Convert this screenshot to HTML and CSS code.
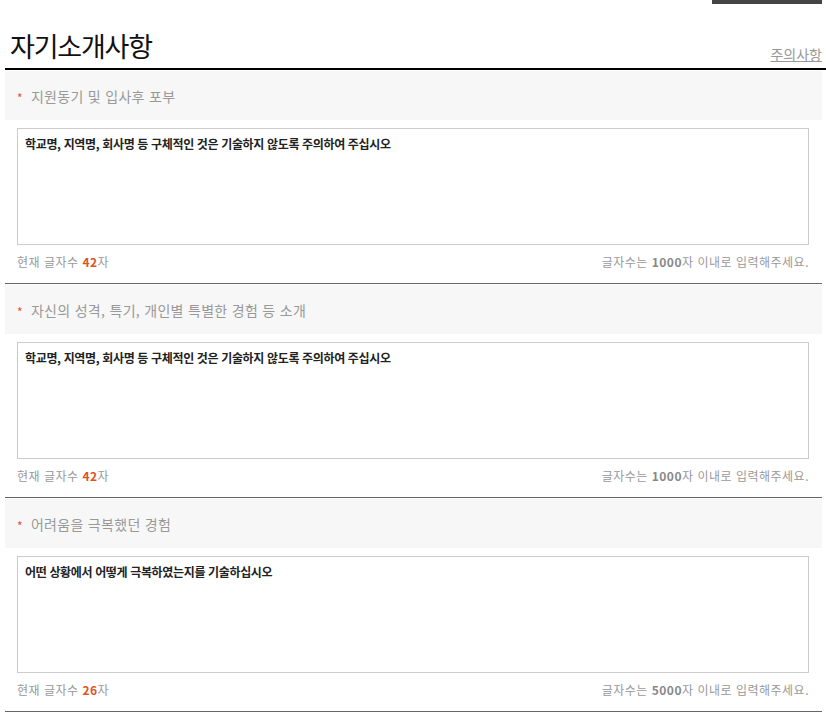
FILE: index.html
```html
<!DOCTYPE html>
<html lang="ko">
  <head>
    <meta charset="UTF-8" />
    <meta name="viewport" content="width=device-width, initial-scale=1.0" />
    <title>자기소개사항</title>
    <link rel="stylesheet" href="styles.css">
  </head>
  <body>
    <div class="top-bar"><span class="top-tab"></span></div>

    <div class="intro">
      <!-- 제목 영역 -->
      <div class="intro-head">
        <h2 class="intro-title">자기소개사항</h2>
        <a href="#" class="intro-notice">주의사항</a>
      </div>

      <!-- 문항 1 -->
      <div class="q-item">
        <div class="q-label"><span class="q-star">*</span>지원동기 및 입사후 포부</div>
        <div class="q-body">
          <div class="q-box">학교명, 지역명, 회사명 등 구체적인 것은 기술하지 않도록 주의하여 주십시오</div>
        </div>
        <div class="q-foot">
          <span>현재 글자수 <b class="q-count">42</b>자</span>
          <span>글자수는 <b>1000</b>자 이내로 입력해주세요.</span>
        </div>
      </div>

      <!-- 문항 2 -->
      <div class="q-item">
        <div class="q-label"><span class="q-star">*</span>자신의 성격, 특기, 개인별 특별한 경험 등 소개</div>
        <div class="q-body">
          <div class="q-box">학교명, 지역명, 회사명 등 구체적인 것은 기술하지 않도록 주의하여 주십시오</div>
        </div>
        <div class="q-foot">
          <span>현재 글자수 <b class="q-count">42</b>자</span>
          <span>글자수는 <b>1000</b>자 이내로 입력해주세요.</span>
        </div>
      </div>

      <!-- 문항 3 -->
      <div class="q-item">
        <div class="q-label"><span class="q-star">*</span>어려움을 극복했던 경험</div>
        <div class="q-body">
          <div class="q-box">어떤 상황에서 어떻게 극복하였는지를 기술하십시오</div>
        </div>
        <div class="q-foot">
          <span>현재 글자수 <b class="q-count">26</b>자</span>
          <span>글자수는 <b>5000</b>자 이내로 입력해주세요.</span>
        </div>
      </div>
    </div>
  </body>
</html>
```

FILE: styles.css
```css
* {
  padding: 0;
  margin: 0;
  box-sizing: border-box;
}

body {
  background-color: #fff;
  font-family: "Noto Sans CJK KR", "Noto Sans", sans-serif;
  color: #333;
  overflow: hidden;
}

/* 상단 탭 막대 */
.top-bar {
  height: 4px;
  display: flex;
  justify-content: flex-end;
  padding-right: 4px;
}

.top-tab {
  width: 110px;
  height: 4px;
  background-color: #444;
}

.intro {
  width: 817px;
  margin-left: 5px;
}

.intro-head {
  height: 66px;
  margin-right: -4px;
  padding: 0 4px 0 5px;
  display: flex;
  align-items: flex-end;
  justify-content: space-between;
  border-bottom: 2px solid #000;
}

.intro-title {
  font-size: 27px;
  font-weight: 400;
  letter-spacing: -1.2px;
  color: #111;
  line-height: 38px;
  padding-bottom: 3px;
}

.intro-notice {
  font-size: 14px;
  color: #999;
  line-height: 20px;
  padding-bottom: 4px;
}

/* 문항 */
.q-item {
  padding-top: 1px;
  border-bottom: 1px solid #666;
}

.q-label {
  height: 49px;
  background-color: #f7f7f7;
  padding-left: 12px;
  display: flex;
  align-items: center;
  font-size: 14px;
  color: #999;
  letter-spacing: 0.3px;
}

.q-star {
  color: #e8503a;
  font-size: 12px;
  margin-right: 8px;
  margin-top: 3px;
}

.q-body {
  padding: 8px 13px 0 12px;
}

.q-box {
  height: 117px;
  border: 1px solid #ccc;
  padding: 6px 7px;
  font-size: 12px;
  font-weight: 700;
  letter-spacing: -0.35px;
  color: #222;
}

.q-foot {
  display: flex;
  justify-content: space-between;
  padding: 7px 13px 11px 12px;
  line-height: 20px;
  font-size: 12px;
  letter-spacing: 0.5px;
  color: #999;
}

.q-foot b {
  color: #888;
}

.q-foot .q-count {
  color: #e0531f;
}
```
